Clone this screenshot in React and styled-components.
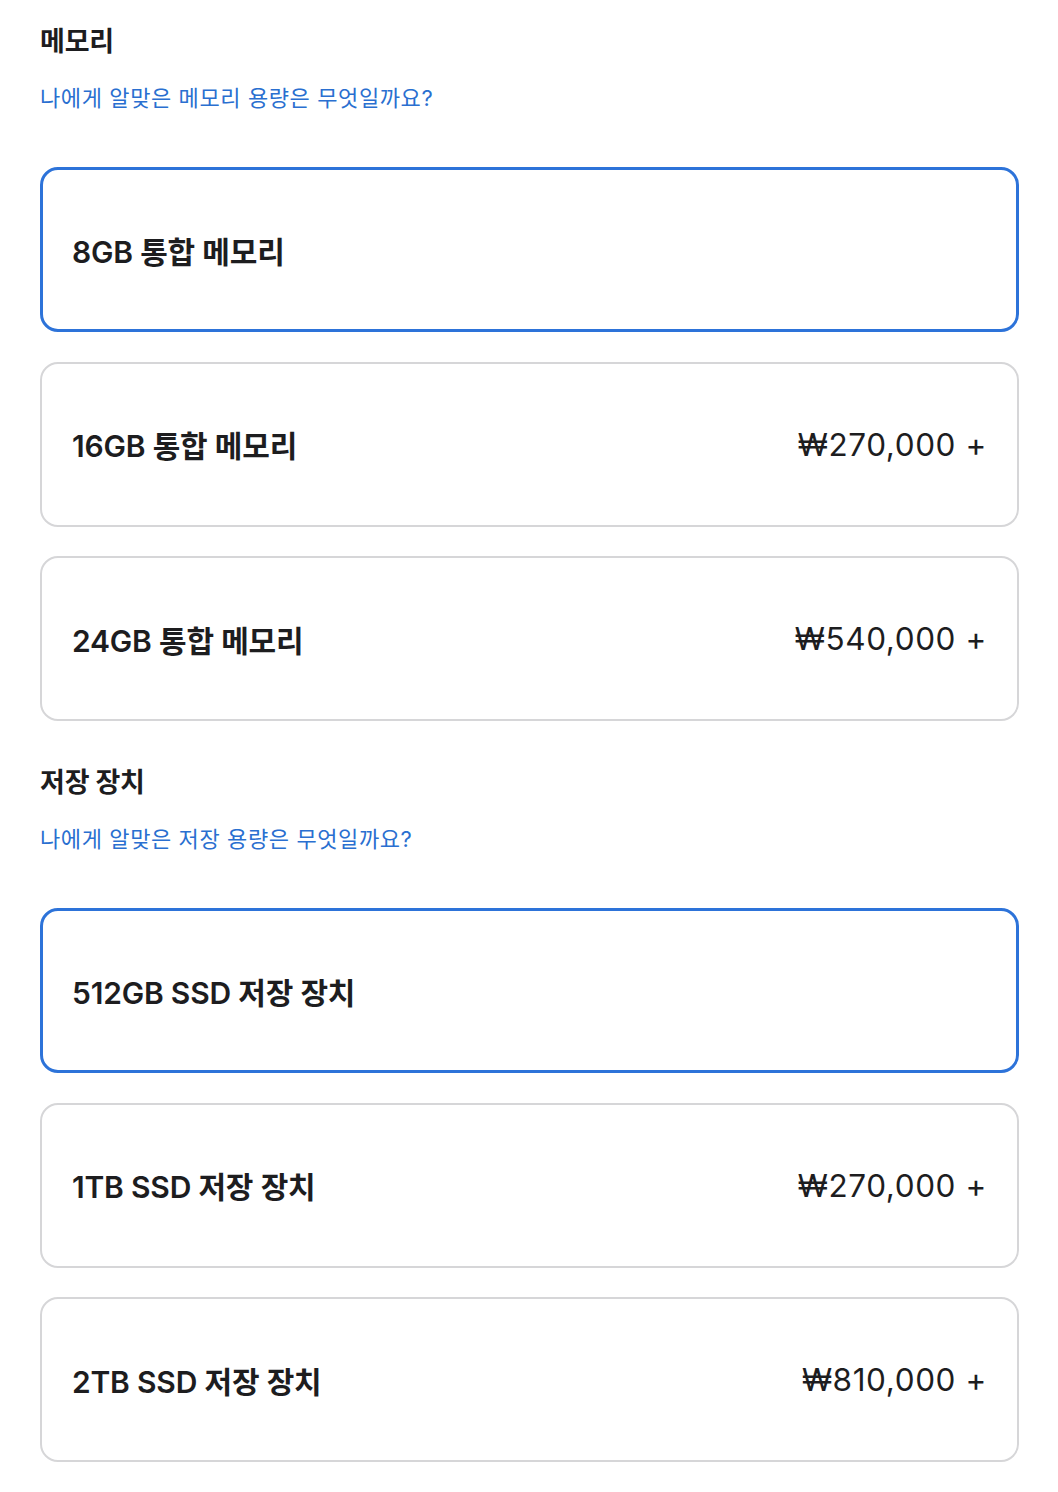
import React from 'react';
import styled, { createGlobalStyle } from 'styled-components';

const GlobalStyle = createGlobalStyle`
  body {
    margin: 0;
    background: #fff;
    font-family: "Inter", "Noto Sans CJK KR", sans-serif;
    color: #1d1d1f;
  }
`;

const Page = styled.div`
  padding: 24px 39px 30px 40px;
  display: flex;
  flex-direction: column;
`;

const Section = styled.section`
  display: flex;
  flex-direction: column;
  margin-bottom: 44px;
`;

const Title = styled.h2`
  margin: 0;
  font-size: 27px;
  font-weight: 700;
  line-height: 36px;
  letter-spacing: -0.2px;
`;

const HelpLink = styled.a`
  margin-top: 23px;
  font-size: 22px;
  line-height: 30px;
  letter-spacing: 0.6px;
  color: #2a6fd0;
  text-decoration: none;
  cursor: pointer;
`;

const Options = styled.div`
  margin-top: 54px;
  display: flex;
  flex-direction: column;
  gap: 29.5px;
`;

const Option = styled.div`
  height: 165px;
  box-sizing: border-box;
  border-radius: 18px;
  border: ${(props) => (props.selected ? '3px solid #2d73d9' : '2px solid #d6d6d8')};
  padding: 0 ${(props) => (props.selected ? 29 : 30)}px 0 ${(props) => (props.selected ? 29 : 30)}px;
  display: flex;
  align-items: center;
  justify-content: space-between;
  font-size: 30px;
`;

const Name = styled.span`
  font-weight: 600;
  letter-spacing: -0.2px;
`;

const Price = styled.span`
  font-size: 31.5px;
  font-weight: 400;
  letter-spacing: 0.6px;
`;

const memory = [
  { name: '8GB 통합 메모리', selected: true },
  { name: '16GB 통합 메모리', price: '₩270,000 +' },
  { name: '24GB 통합 메모리', price: '₩540,000 +' },
];

const storage = [
  { name: '512GB SSD 저장 장치', selected: true },
  { name: '1TB SSD 저장 장치', price: '₩270,000 +' },
  { name: '2TB SSD 저장 장치', price: '₩810,000 +' },
];

const OptionGroup = ({ title, link, items }) => (
  <Section>
    <Title>{title}</Title>
    <HelpLink>{link}</HelpLink>
    <Options>
      {items.map((item) => (
        <Option key={item.name} selected={item.selected}>
          <Name>{item.name}</Name>
          {item.price && <Price>{item.price}</Price>}
        </Option>
      ))}
    </Options>
  </Section>
);

const App = () => (
  <>
    <GlobalStyle />
    <Page>
      <OptionGroup title="메모리" link="나에게 알맞은 메모리 용량은 무엇일까요?" items={memory} />
      <OptionGroup title="저장 장치" link="나에게 알맞은 저장 용량은 무엇일까요?" items={storage} />
    </Page>
  </>
);

export default App;
